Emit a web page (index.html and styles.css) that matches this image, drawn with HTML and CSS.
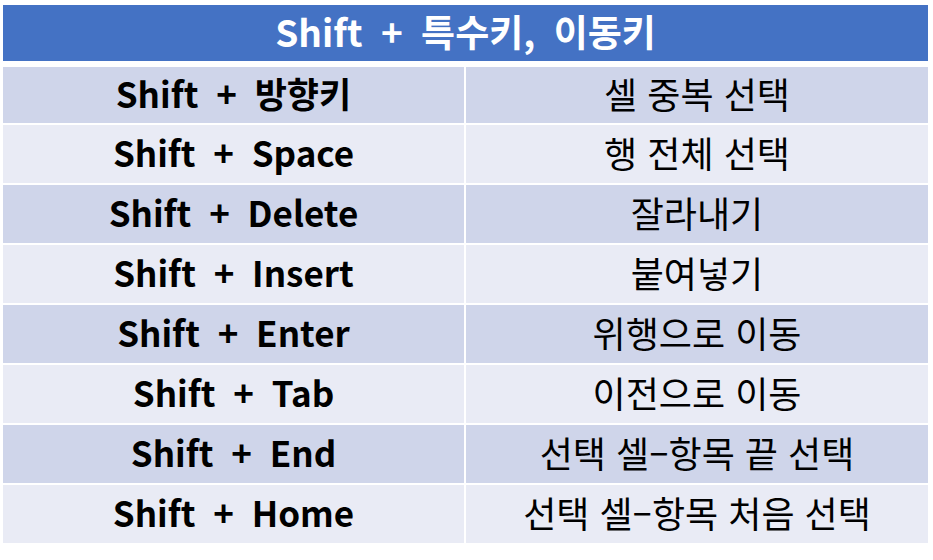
FILE: index.html
```html
<!DOCTYPE html>
<html lang="ko">
<head>
<meta charset="utf-8">
<link rel="stylesheet" href="styles.css">
</head>
<body>
<div class="sheet">
  <div class="title">Shift + 특수키, 이동키</div>
  <div class="grid">
    <div class="cell key odd first">Shift + 방향키</div>
    <div class="cell desc odd first">셀 중복 선택</div>
    <div class="cell key even">Shift + Space</div>
    <div class="cell desc even">행 전체 선택</div>
    <div class="cell key odd">Shift + Delete</div>
    <div class="cell desc odd">잘라내기</div>
    <div class="cell key even">Shift + Insert</div>
    <div class="cell desc even">붙여넣기</div>
    <div class="cell key odd">Shift + Enter</div>
    <div class="cell desc odd">위행으로 이동</div>
    <div class="cell key even">Shift + Tab</div>
    <div class="cell desc even">이전으로 이동</div>
    <div class="cell key odd">Shift + End</div>
    <div class="cell desc odd">선택 셀–항목 끝 선택</div>
    <div class="cell key even">Shift + Home</div>
    <div class="cell desc even">선택 셀–항목 처음 선택</div>
  </div>
</div>
</body>
</html>
```
FILE: styles.css
```css
html, body {
  margin: 0;
  padding: 0;
  background: #ffffff;
}
body {
  width: 933px;
  height: 560px;
  overflow: hidden;
  font-family: "Noto Sans CJK KR", "Noto Sans", sans-serif;
  color: #000000;
}
.sheet {
  padding: 5px 5px 0 3px;
  width: 925px;
}
.title {
  height: 56px;
  background: #4472c4;
  color: #ffffff;
  font-weight: 700;
  font-size: 37px;
  line-height: 1;
  padding-bottom: 4px;
  box-sizing: border-box;
  display: flex;
  align-items: center;
  justify-content: center;
  word-spacing: 8px;
  margin-bottom: 6px;
}
.grid {
  display: grid;
  grid-template-columns: 461px 462px;
  grid-auto-rows: 58px;
  grid-template-rows: 56px;
  column-gap: 2px;
  row-gap: 2px;
}
.cell {
  display: flex;
  align-items: center;
  justify-content: center;
  font-size: 35px;
  line-height: 1;
  padding-bottom: 5px;
  box-sizing: border-box;
}
.key {
  font-weight: 700;
  word-spacing: 8px;
}
.desc {
  font-weight: 400;
  font-size: 36px;
}
.odd { background: #cfd5ea; }
.even { background: #e9ebf5; }
```
